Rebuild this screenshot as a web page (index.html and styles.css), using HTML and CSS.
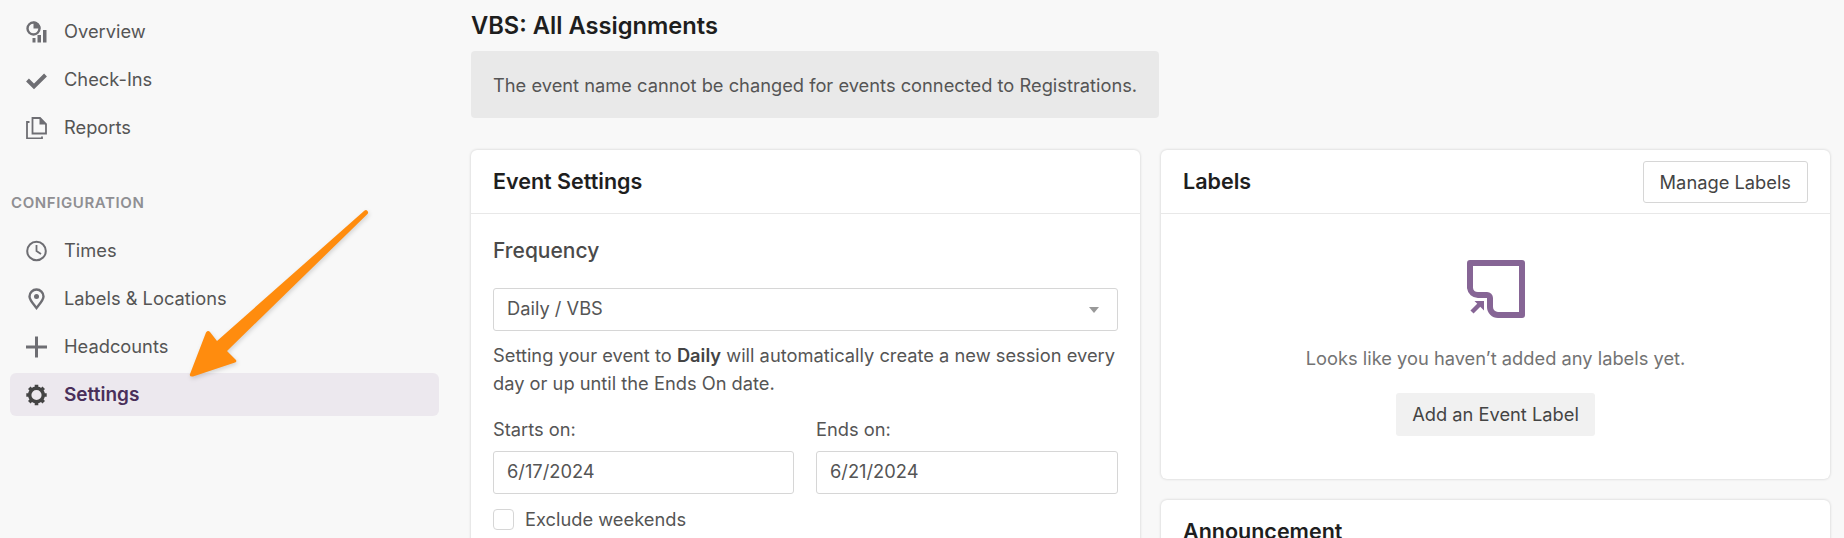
FILE: index.html
```html
<!DOCTYPE html>
<html lang="en">
<head>
  <meta charset="UTF-8" />
  <title>VBS: All Assignments</title>
  <link rel="stylesheet" href="styles.css">
</head>
<body>

  <div class="page">
    <!-- Sidebar -->
    <nav class="sidebar">
      <a class="nav-item">
        <svg class="nav-icon" viewBox="0 0 21 22">
          <circle cx="7.5" cy="7.5" r="6" fill="none" stroke="#6e6e73" stroke-width="2.4"/>
          <path d="M7.5 0.5a7 7 0 0 1 7 7h-7z" fill="#6e6e73"/>
          <rect x="6.5" y="17" width="3" height="4.5" fill="#6e6e73"/>
          <rect x="11.5" y="14" width="3.5" height="7.5" fill="#6e6e73"/>
          <rect x="17" y="9" width="3.5" height="12.5" fill="#6e6e73"/>
        </svg>
        Overview
      </a>
      <a class="nav-item">
        <svg class="nav-icon" viewBox="0 0 21 22">
          <path d="M1.5 11l6.5 6.5L19.5 6" fill="none" stroke="#6e6e73" stroke-width="4"/>
        </svg>
        Check-Ins
      </a>
      <a class="nav-item">
        <svg class="nav-icon" viewBox="0 0 21 22">
          <path d="M6.5 1h7.5l6 6v9.5h-13.500z" fill="none" stroke="#6e6e73" stroke-width="1.800"/>
          <path d="M13.500 1v6.500h6.500z" fill="#6e6e73"/>
          <path d="M3.500 5h-2.500v16.500h15v-2" fill="none" stroke="#6e6e73" stroke-width="1.800"/>
        </svg>
        Reports
      </a>

      <div class="nav-heading">CONFIGURATION</div>

      <a class="nav-item">
        <svg class="nav-icon" viewBox="0 0 21 22">
          <circle cx="10.500" cy="11" r="9.300" fill="none" stroke="#6e6e73" stroke-width="2"/>
          <path d="M10.500 5v6l4.500 3" fill="none" stroke="#6e6e73" stroke-width="1.800"/>
        </svg>
        Times
      </a>
      <a class="nav-item">
        <svg class="nav-icon" viewBox="0 0 21 22">
          <path d="M10.500 20c-3.500-4.500-7-8-7-11.500a7 7 0 0 1 14 0c0 3.500-3.500 7-7 11.500z" fill="none" stroke="#6e6e73" stroke-width="2.400"/>
          <circle cx="10.500" cy="8.500" r="2.500" fill="#6e6e73"/>
        </svg>
        Labels &amp; Locations
      </a>
      <a class="nav-item">
        <svg class="nav-icon" viewBox="0 0 21 22">
          <path d="M10.500 0.500v21M0 11h21" fill="none" stroke="#6e6e73" stroke-width="3"/>
        </svg>
        Headcounts
      </a>
      <a class="nav-item active">
        <svg class="nav-icon" viewBox="0 0 21 22">
          <circle cx="10.500" cy="11" r="6.800" fill="none" stroke="#444" stroke-width="3.400"/>
          <path d="M10.500 0.800v3M10.500 18.200v3M0.300 11h3M17.700 11h3M3.300 3.800l2.100 2.100M15.600 16.100l2.100 2.100M3.300 18.200l2.100-2.100M15.600 5.900l2.100-2.100" fill="none" stroke="#444" stroke-width="3.600"/>
        </svg>
        Settings
      </a>
    </nav>

    <!-- Main content -->
    <main class="main">
      <h1>VBS: All Assignments</h1>
      <div class="notice">The event name cannot be changed for events connected to Registrations.</div>

      <div class="columns">
        <section class="card">
          <div class="card-header">
            <h2>Event Settings</h2>
          </div>
          <div class="card-body">
            <h3>Frequency</h3>
            <div class="select">
              Daily / VBS
              <span class="caret"></span>
            </div>
            <p class="help">Setting your event to <b>Daily</b> will automatically create a new session every day or up until the Ends On date.</p>
            <div class="dates">
              <div class="field">
                <label>Starts on:</label>
                <div class="input">6/17/2024</div>
              </div>
              <div class="field">
                <label>Ends on:</label>
                <div class="input">6/21/2024</div>
              </div>
            </div>
            <div class="check-row">
              <span class="checkbox"></span>
              Exclude weekends
            </div>
          </div>
        </section>

        <div class="side-cards">
          <section class="card">
            <div class="card-header">
              <h2>Labels</h2>
              <button class="btn">Manage Labels</button>
            </div>
            <div class="empty">
              <svg class="empty-icon" viewBox="0 0 58 58">
                <path d="M3 3h52v52h-24a8 8 0 0 1-8-8v-9a3 3 0 0 0-3-3h-9a8 8 0 0 1-8-7z" fill="none" stroke="#866595" stroke-width="6" stroke-linejoin="round"/>
                <path d="M5 52l8-8" fill="none" stroke="#866595" stroke-width="4.500"/>
                <path d="M7.500 41h9.500v9.500z" fill="#866595"/>
              </svg>
              <p>Looks like you haven’t added any labels yet.</p>
              <button class="btn btn-grey">Add an Event Label</button>
            </div>
          </section>
          <section class="card">
            <div class="card-header">
              <h2>Announcement</h2>
            </div>
          </section>
        </div>
      </div>
    </main>
  </div>

  <!-- Annotation arrow -->
  <svg class="arrow" width="1844" height="538" viewBox="0 0 1844 538">
    <path d="M367 210.500Q369 212 367.500 214L227 351L236 360Q237 362 235 362.500L193 376.500Q189 377 190 374L206 332.500Q208 330 210 332L217 341L364 211Q366 209.500 367 210.500z" fill="#ff8c0e"/>
  </svg>

</body>
</html>
```

FILE: styles.css
```css
* {
  box-sizing: border-box;
}

html, body {
  margin: 0;
  height: 538px;
  overflow: hidden;
}

body {
  font-family: Inter, "Noto Sans", sans-serif;
  font-size: 18.300px;
  color: #555;
  background: #f8f8f8;
  position: relative;
}

.page {
  display: flex;
  height: 538px;
}

/* Sidebar */
.sidebar {
  width: 449px;
  flex-shrink: 0;
  padding: 10px 10px 0;
  display: flex;
  flex-direction: column;
  gap: 5px;
}

.nav-item {
  display: flex;
  align-items: center;
  height: 43px;
  padding: 0 0 2px 16px;
  border-radius: 6px;
  color: #555;
}

.nav-item.active {
  padding-bottom: 0;
  background: #ece8ee;
  color: #4a2f5a;
  font-size: 19px;
  font-weight: 600;
}

.nav-icon {
  width: 21px;
  height: 22px;
  margin: 2px 17px 0 0;
  flex-shrink: 0;
}

.nav-item.active .nav-icon {
  margin-top: 0;
}

.nav-heading {
  height: 70px;
  padding: 39px 0 0 1px;
  font-size: 15px;
  line-height: 20px;
  font-weight: 600;
  letter-spacing: 0.6px;
  color: #8f8f93;
}

/* Main */
.main {
  flex: 1;
  padding: 12px 14px 0 22px;
}

h1 {
  margin: 0 0 11px;
  font-size: 23.700px;
  line-height: 28px;
  font-weight: 600;
  color: #1e1e1e;
}

.notice {
  width: 688px;
  height: 67px;
  padding: 0 22px;
  display: flex;
  align-items: center;
  background: #e9e9e9;
  border-radius: 4px;
  color: #555;
  white-space: nowrap;
}

.columns {
  display: grid;
  grid-template-columns: 669px 669px;
  gap: 21px;
  margin-top: 32px;
  align-items: start;
}

.side-cards {
  display: flex;
  flex-direction: column;
  gap: 21px;
}

.card {
  background: #fff;
  border-radius: 6px;
  box-shadow: 0 0 3px rgba(0, 0, 0, 0.18);
}

.card-header {
  height: 64px;
  padding: 0 22px;
  display: flex;
  align-items: center;
  justify-content: space-between;
  border-bottom: 1px solid #e8e8e8;
}

h2 {
  margin: 0 0 2px;
  font-size: 21.500px;
  font-weight: 600;
  color: #1e1e1e;
}

.card-body {
  padding: 22px 22px 30px;
}

h3 {
  margin: 0 0 22px;
  font-size: 21px;
  line-height: 30px;
  font-weight: 500;
  color: #4a4a4a;
}

.select, .input {
  height: 43px;
  display: flex;
  align-items: center;
  padding: 0 13px 3px;
  border: 1px solid #d6d6d6;
  border-radius: 3px;
  background: #fff;
  color: #555;
}

.select {
  justify-content: space-between;
}

.caret {
  border-left: 5px solid transparent;
  border-right: 5px solid transparent;
  border-top: 6px solid #999;
  margin: 3px 5px 0 0;
}

.help {
  margin: 10px 0 0;
  line-height: 28px;
  color: #555;
}

.help b {
  font-weight: 600;
  color: #444;
}

.dates {
  display: grid;
  grid-template-columns: 301px 302px;
  gap: 22px;
  margin-top: 18px;
}

.field label {
  display: block;
  line-height: 28px;
  margin-bottom: 8px;
}

.check-row {
  display: flex;
  align-items: center;
  gap: 11px;
  margin-top: 14px;
}

.checkbox {
  width: 21px;
  height: 21px;
  margin-top: 1px;
  border: 1px solid #d6d6d6;
  border-radius: 4px;
  background: #fff;
}

.btn {
  font: inherit;
  height: 42px;
  padding: 0 16px;
  border: 1px solid #d6d6d6;
  border-radius: 3px;
  background: #fff;
  color: #444;
}

.btn-grey {
  height: 43px;
  padding: 0 16px 1px;
  border: 0;
  background: #f1f1f1;
}

.empty {
  height: 265px;
  padding-top: 46px;
  display: flex;
  flex-direction: column;
  align-items: center;
}

.empty-icon {
  width: 58px;
  height: 58px;
}

.empty p {
  margin: 26px 0 21px;
  line-height: 28px;
  color: #737373;
}

.arrow {
  position: absolute;
  left: 0;
  top: 0;
  pointer-events: none;
  filter: drop-shadow(1px 2px 2px rgba(0, 0, 0, 0.15));
}
```
